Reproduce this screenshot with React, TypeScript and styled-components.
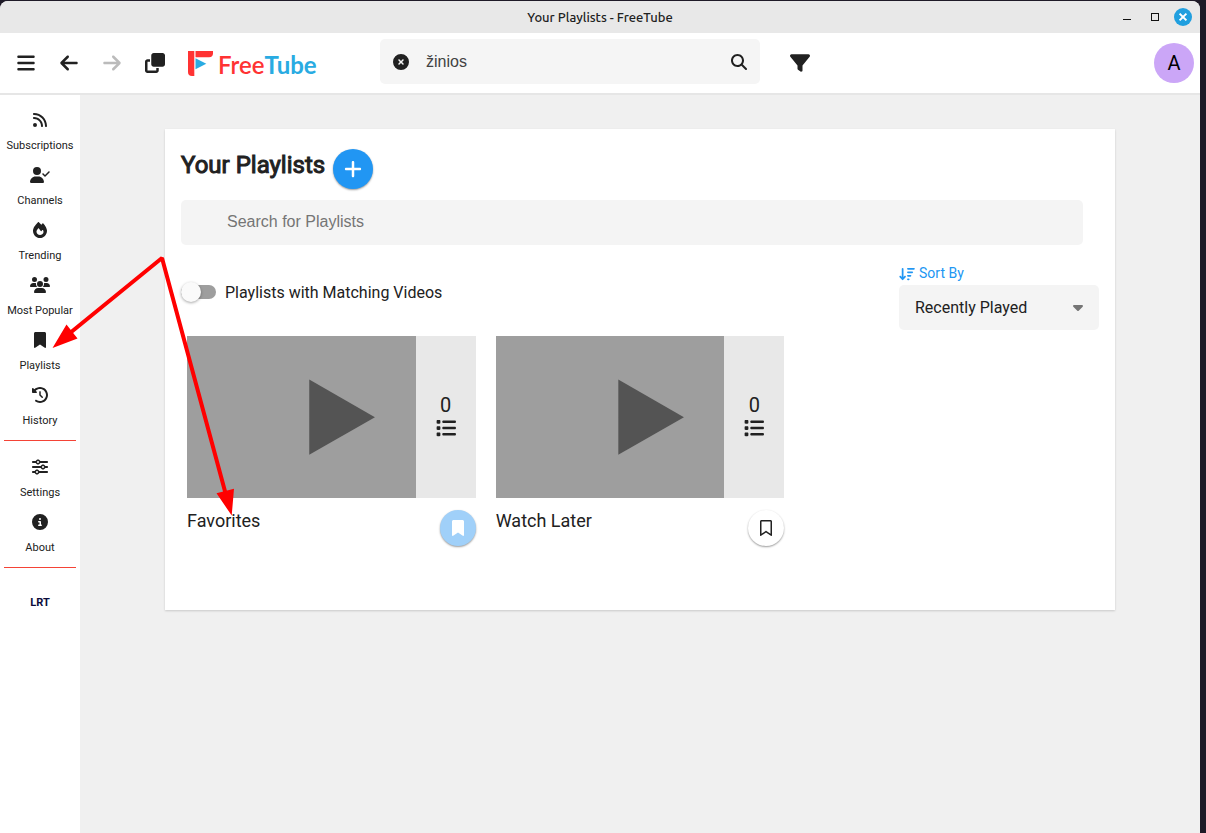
import React from "react";
import styled, { createGlobalStyle } from "styled-components";
import {
  FaArrowDownWideShort,
  FaArrowLeft,
  FaArrowRight,
  FaBars,
  FaBookmark,
  FaCaretDown,
  FaCircleInfo,
  FaCircleXmark,
  FaClockRotateLeft,
  FaClone,
  FaFilter,
  FaFire,
  FaList,
  FaMagnifyingGlass,
  FaPlus,
  FaRegBookmark,
  FaRss,
  FaSliders,
  FaUserCheck,
  FaUsers,
} from "react-icons/fa6";

const GlobalStyle = createGlobalStyle`
  *, *::before, *::after { box-sizing: border-box; }
  body {
    margin: 0;
    background: #1e1a27;
    color: #212121;
    font-family: Roboto, "Liberation Sans", sans-serif;
    font-size: 16px;
  }
  button, input, select { font: inherit; color: inherit; border: 0; margin: 0; }
  button { padding: 0; background: none; cursor: pointer; }
`;

const Desktop = styled.div`
  position: relative;
  min-height: 100vh;
  padding: 1px 6px 0 0;
  display: flex;
`;

const AppWindow = styled.div`
  flex: 1;
  min-width: 0;
  display: flex;
  flex-direction: column;
  background: #f0f0f0;
  border-radius: 8px 8px 0 0;
  overflow: hidden;
`;

const TitleBar = styled.div`
  display: grid;
  grid-template-columns: 1fr auto 1fr;
  align-items: center;
  height: 32px;
  padding-right: 8px;
  background: #e8e8e8;
`;

const WindowTitle = styled.span`
  grid-column: 2;
  padding-left: 8px;
  font: 500 13px/20px Ubuntu, "Noto Sans", sans-serif;
`;

const WindowControls = styled.div`
  display: flex;
  justify-content: flex-end;
  gap: 10px;
`;

const WindowButton = styled.button`
  width: 18px;
  height: 18px;
  svg { display: block; }
`;

const Header = styled.header`
  position: relative;
  display: grid;
  grid-template-columns: minmax(330px, 1fr) 440px minmax(60px, 1fr);
  align-items: center;
  height: 60px;
  background: #fff;
  box-shadow: 0 2px 0 #e6e6e6;
`;

const HeaderSide = styled.div<{ $end?: boolean }>`
  display: flex;
  align-items: center;
  justify-content: ${(p) => (p.$end ? "flex-end" : "flex-start")};
  padding: 0 6px 0 4px;
`;

const IconButton = styled.button<{ $size?: number; $muted?: boolean; $width?: number }>`
  display: flex;
  flex: none;
  align-items: center;
  justify-content: center;
  width: ${(p) => p.$width ?? 43}px;
  height: 43px;
  opacity: ${(p) => (p.$muted ? 0.3 : 1)};
  svg { height: ${(p) => p.$size ?? 20}px; width: ${(p) => p.$size ?? 20}px; }
`;

const Logo = styled.a`
  display: flex;
  align-items: center;
  gap: 4px;
  margin-left: 12px;
  color: #ff3333;
  font: 24px/28px Lato, sans-serif;
  font-weight: 600;
  text-decoration: none;
  b { color: #29abe2; font-weight: 700; }
  span { padding-top: 3px; }
`;

const SearchArea = styled.div`
  display: flex;
  align-items: center;
  gap: 20px;
`;

const SearchBox = styled.div`
  display: flex;
  flex: 1;
  align-items: center;
  height: 45px;
  margin-bottom: 3px;
  border-radius: 5px;
  background: #f5f5f5;
`;

const SearchInput = styled.input`
  flex: 1;
  min-width: 0;
  padding: 0 4px;
  background: none;
  color: #424242;
  font-family: "Liberation Sans", Arial, sans-serif;
  line-height: 20px;
  outline: none;
`;

const Avatar = styled.button`
  width: 40px;
  height: 40px;
  border-radius: 50%;
  background: #cba6f7;
  color: #000;
  font-size: 20px;
  line-height: 40px;
`;

const Body = styled.div`
  display: flex;
  flex: 1;
`;

const SideNav = styled.nav`
  flex: none;
  width: 80px;
  padding-top: 12px;
  background: #fff;
`;

const NavLink = styled.a`
  display: flex;
  flex-direction: column;
  align-items: center;
  gap: 11px;
  height: 55px;
  padding-top: 7px;
  color: inherit;
  font-size: 11px;
  line-height: 14px;
  white-space: nowrap;
  text-decoration: none;
  svg { height: 16px; width: 20px; }
`;

const Divider = styled.hr`
  height: 0;
  margin: 5px 4px 11px;
  border: 0;
  border-top: 1px solid #f44336;
`;

const ChannelLink = styled.a`
  display: block;
  margin-top: 27px;
  color: #0b0b3b;
  font: 700 11px/16px Roboto, sans-serif;
  text-align: center;
  text-decoration: none;
`;

const Main = styled.main`
  flex: 1;
  min-width: 0;
  padding: 36px 85px;
`;

const Card = styled.section`
  min-height: 481px;
  padding: 16px;
  background: #fff;
  box-shadow: 0 1px 2px rgba(0, 0, 0, 0.16);
`;

const Heading = styled.div`
  display: flex;
  align-items: flex-start;
  gap: 8px;
  h2 {
    margin: 0;
    font-size: 24px;
    font-weight: 400;
    line-height: 40px;
    -webkit-text-stroke: 1px currentColor;
  }
`;

const RoundButton = styled.button<{ $size: number; $bg: string; $fg: string }>`
  display: flex;
  flex: none;
  align-items: center;
  justify-content: center;
  width: ${(p) => p.$size}px;
  height: ${(p) => p.$size}px;
  margin-top: 4px;
  border-radius: 50%;
  background: ${(p) => p.$bg};
  color: ${(p) => p.$fg};
  box-shadow: 0 1px 2px rgba(0, 0, 0, 0.4);
  svg { height: ${(p) => (p.$size === 40 ? 20 : 16)}px; width: ${(p) => (p.$size === 40 ? 20 : 16)}px; }
`;

const PlaylistSearch = styled.input`
  display: block;
  width: calc(100% - 16px);
  height: 45px;
  margin-top: 11px !important;
  padding: 0 46px 2px;
  border-radius: 5px;
  background: #f4f4f4;
  font-family: "Liberation Sans", Arial, sans-serif;
  &::placeholder { color: #757575; }
`;

const Options = styled.div`
  display: flex;
  align-items: flex-start;
  justify-content: space-between;
  padding-top: 19px;
`;

const Toggle = styled.label`
  display: flex;
  align-items: center;
  gap: 9px;
  height: 56px;
`;

const Switch = styled.input`
  appearance: none;
  display: flex;
  align-items: center;
  width: 35px;
  height: 14px;
  border-radius: 7px;
  background: #9e9e9e;
  &::before {
    content: "";
    width: 20px;
    height: 20px;
    flex: none;
    border-radius: 50%;
    background: #fafafa;
    box-shadow: 0 1px 3px rgba(0, 0, 0, 0.35);
  }
  &:checked { justify-content: flex-end; }
`;

const SortField = styled.div`
  display: flex;
  flex-direction: column;
  width: 200px;
  label {
    display: flex;
    align-items: center;
    gap: 4px;
    height: 21px;
    padding-bottom: 2px;
    color: #2196f3;
    font-size: 14px;
    line-height: 17px;
  }
  label svg { height: 14px; width: 16px; }
`;

const SelectWrap = styled.div`
  position: relative;
  select {
    appearance: none;
    width: 100%;
    height: 45px;
    padding: 0 40px 0 16px;
    border-radius: 5px;
    background: #f4f4f4;
  }
  svg {
    position: absolute;
    top: 14px;
    right: 13px;
    height: 16px;
    width: 16px;
    color: #757575;
    pointer-events: none;
  }
`;

const PlaylistGrid = styled.div`
  display: grid;
  grid-template-columns: repeat(auto-fill, minmax(250px, 1fr));
  gap: 8px;
`;

const Playlist = styled.article`
  padding: 6px;
`;

const Thumbnail = styled.a`
  display: grid;
  grid-template-columns: 1fr 60px;
  aspect-ratio: 16 / 9;
  background: #9e9e9e;
  color: inherit;
  text-decoration: none;
  > svg { grid-area: 1 / 1 / 2 / 3; width: 100%; height: 100%; }
`;

const VideoCount = styled.div`
  grid-area: 1 / 2;
  display: flex;
  flex-direction: column;
  align-items: center;
  justify-content: center;
  gap: 1px;
  padding-bottom: 4px;
  background: #e8e8e8;
  font-size: 20px;
  line-height: 24px;
  svg { height: 20px; width: 20px; }
`;

const PlaylistInfo = styled.div`
  display: flex;
  align-items: flex-start;
  justify-content: space-between;
  padding-top: 8px;
  h3 { margin: 4px 0 0; font-size: 18px; font-weight: 400; line-height: 22px; }
`;

const Annotation = styled.svg`
  position: absolute;
  top: 0;
  left: 0;
  pointer-events: none;
`;

const primaryLinks = [
  { label: "Subscriptions", icon: <FaRss /> },
  { label: "Channels", icon: <FaUserCheck /> },
  { label: "Trending", icon: <FaFire /> },
  { label: "Most Popular", icon: <FaUsers /> },
  { label: "Playlists", icon: <FaBookmark /> },
  { label: "History", icon: <FaClockRotateLeft /> },
];

const secondaryLinks = [
  { label: "Settings", icon: <FaSliders /> },
  { label: "About", icon: <FaCircleInfo /> },
];

const playlists = [
  { title: "Favorites", count: 0, quick: true },
  { title: "Watch Later", count: 0, quick: false },
];

export default function App() {
  return (
    <Desktop>
      <GlobalStyle />
      <AppWindow>
        <TitleBar>
          <WindowTitle>Your Playlists - FreeTube</WindowTitle>
          <WindowControls>
            <WindowButton aria-label="Minimize">
              <svg width="18" height="18" viewBox="0 0 18 18">
                <path d="M5 11.5h8" stroke="#111" />
              </svg>
            </WindowButton>
            <WindowButton aria-label="Maximize">
              <svg width="18" height="18" viewBox="0 0 18 18">
                <rect x="5.500" y="5.500" width="7" height="7" fill="none" stroke="#111" />
              </svg>
            </WindowButton>
            <WindowButton aria-label="Close">
              <svg width="18" height="18" viewBox="0 0 18 18">
                <circle cx="9" cy="9" r="9" fill="#209fdf" />
                <path d="M5.600 5.600l6.800 6.800M12.400 5.600l-6.800 6.800" stroke="#fff" strokeWidth="2" />
              </svg>
            </WindowButton>
          </WindowControls>
        </TitleBar>

        <Header>
          <HeaderSide>
            <IconButton aria-label="Toggle menu"><FaBars /></IconButton>
            <IconButton aria-label="Back"><FaArrowLeft /></IconButton>
            <IconButton aria-label="Forward" $muted><FaArrowRight /></IconButton>
            <IconButton aria-label="New window"><FaClone /></IconButton>
            <Logo href="#" aria-label="FreeTube">
              <svg width="26" height="26" viewBox="0 0 26 26">
                <path d="M0 1h6.300v25H4a4 4 0 0 1-4-4z" fill="#ff3333" />
                <path d="M7.500 1H25v2.200a4 4 0 0 1-4 4H7.500z" fill="#ff3333" />
                <path d="M7.500 8.300L18.300 13.700 7.500 19.200z" fill="#29abe2" />
              </svg>
              <span>Free<b>Tube</b></span>
            </Logo>
          </HeaderSide>
          <SearchArea>
            <SearchBox>
              <IconButton aria-label="Clear search" $size={16} $width={42}><FaCircleXmark /></IconButton>
              <SearchInput aria-label="Search" defaultValue="žinios" />
              <IconButton aria-label="Search" $size={16} $width={42}><FaMagnifyingGlass /></IconButton>
            </SearchBox>
            <IconButton aria-label="Search filters" $width={40}><FaFilter /></IconButton>
          </SearchArea>
          <HeaderSide $end>
            <Avatar aria-label="Profile">A</Avatar>
          </HeaderSide>
        </Header>

        <Body>
          <SideNav>
            {primaryLinks.map((l) => (
              <NavLink href="#" key={l.label}>{l.icon}{l.label}</NavLink>
            ))}
            <Divider />
            {secondaryLinks.map((l) => (
              <NavLink href="#" key={l.label}>{l.icon}{l.label}</NavLink>
            ))}
            <Divider />
            <ChannelLink href="#">LRT</ChannelLink>
          </SideNav>

          <Main>
            <Card>
              <Heading>
                <h2>Your Playlists</h2>
                <RoundButton aria-label="Create playlist" $size={40} $bg="#2196f3" $fg="#fff"><FaPlus /></RoundButton>
              </Heading>
              <PlaylistSearch aria-label="Search for Playlists" placeholder="Search for Playlists" />
              <Options>
                <Toggle>
                  <Switch type="checkbox" />
                  Playlists with Matching Videos
                </Toggle>
                <SortField>
                  <label htmlFor="sort"><FaArrowDownWideShort />Sort By</label>
                  <SelectWrap>
                    <select id="sort"><option>Recently Played</option></select>
                    <FaCaretDown />
                  </SelectWrap>
                </SortField>
              </Options>
              <PlaylistGrid>
                {playlists.map((p) => (
                  <Playlist key={p.title}>
                    <Thumbnail href="#" aria-label={p.title}>
                      <svg viewBox="0 0 288 162">
                        <path d="M122 43.500L187.500 81 122 118.500z" fill="#545454" />
                      </svg>
                      <VideoCount>{p.count}<FaList /></VideoCount>
                    </Thumbnail>
                    <PlaylistInfo>
                      <h3>{p.title}</h3>
                      <RoundButton
                        aria-label="Quick bookmark"
                        $size={36}
                        $bg={p.quick ? "#a0d0f9" : "#fff"}
                        $fg={p.quick ? "#fff" : "#212121"}
                      >
                        {p.quick ? <FaBookmark /> : <FaRegBookmark />}
                      </RoundButton>
                    </PlaylistInfo>
                  </Playlist>
                ))}
              </PlaylistGrid>
            </Card>
          </Main>
        </Body>
      </AppWindow>

      <Annotation width="300" height="540" viewBox="0 0 300 540" aria-hidden="true">
        <path d="M70 333L162 258L226 495" fill="none" stroke="#f00" strokeWidth="4" strokeLinejoin="bevel" />
        <path d="M52.500 348L66.500 324.500 77.500 338.500zM231.700 515.500L216.500 493.300 234 488.700z" fill="#f00" />
      </Annotation>
    </Desktop>
  );
}
